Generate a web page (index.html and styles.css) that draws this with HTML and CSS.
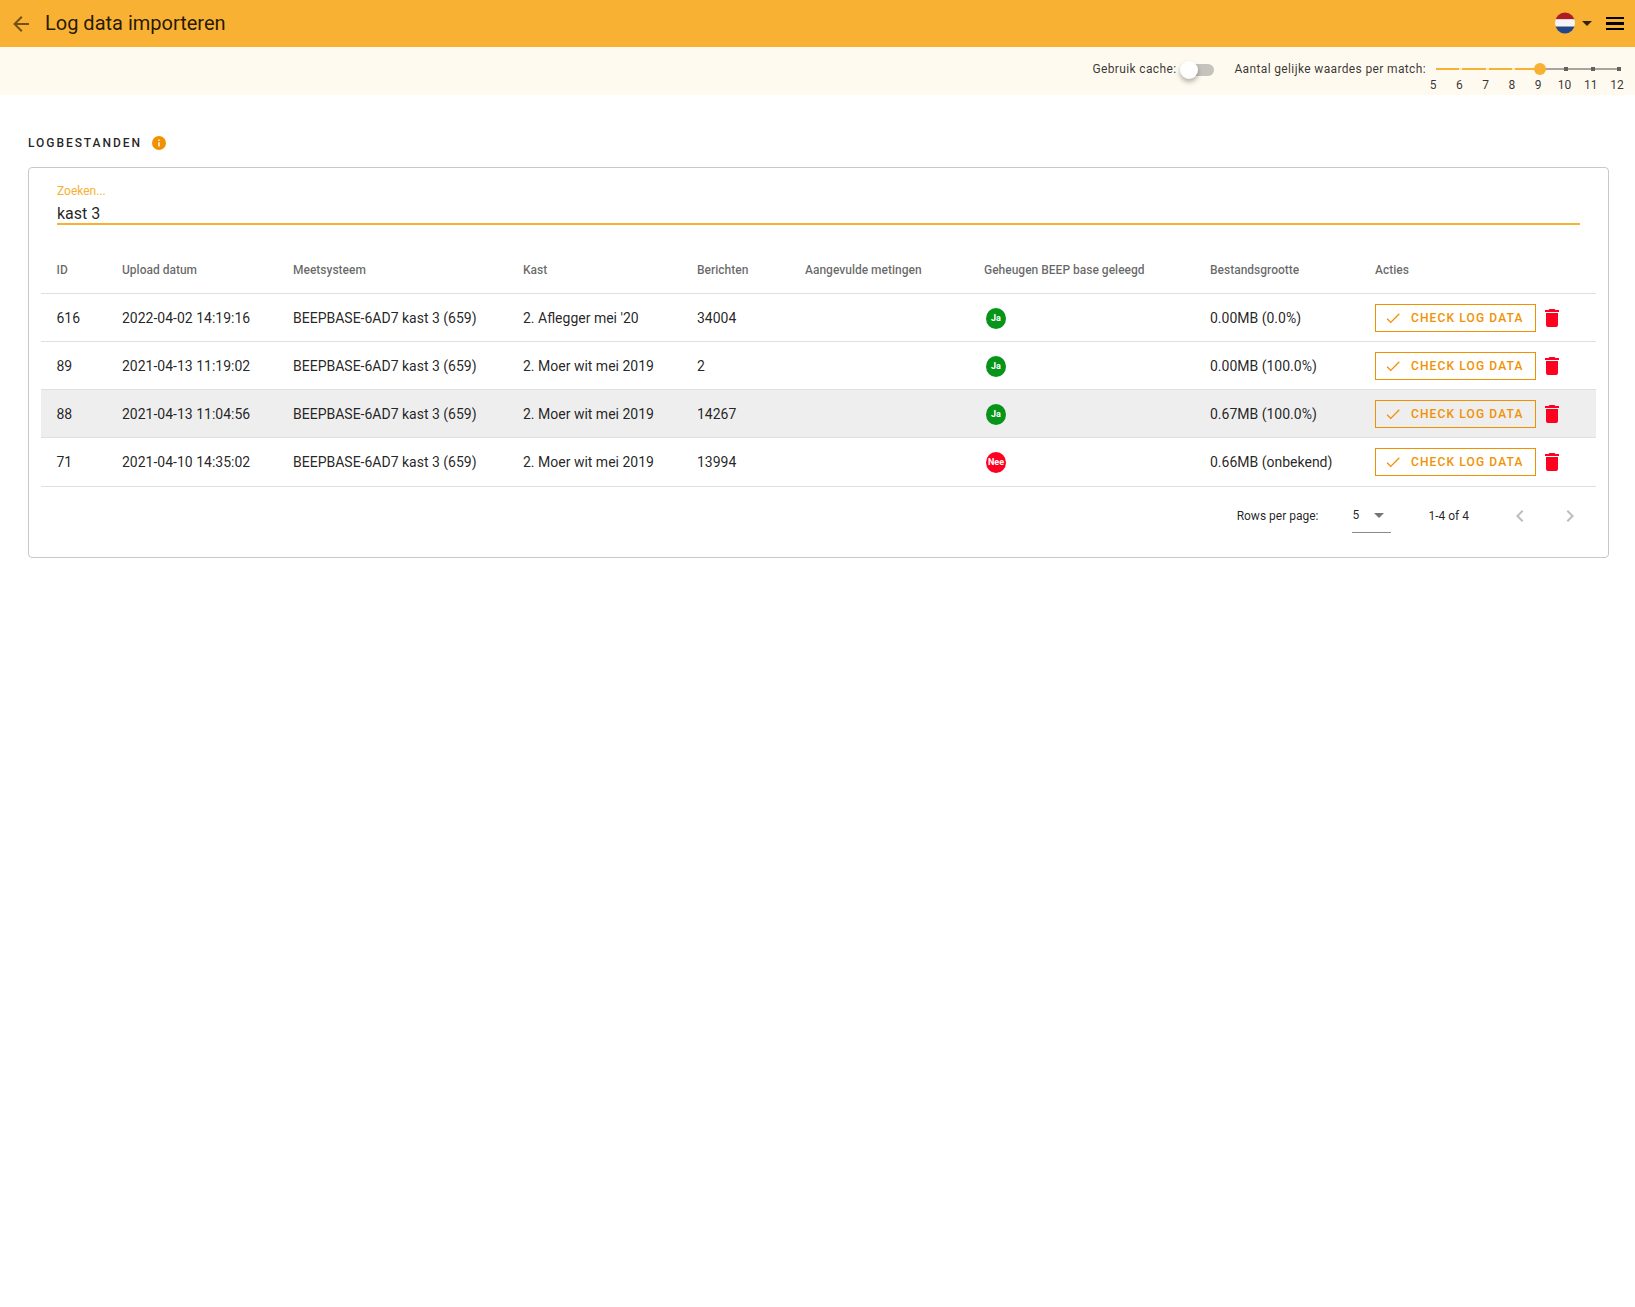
FILE: index.html
```html
<!DOCTYPE html>
<html lang="nl">
<head>
<meta charset="utf-8">
<title>Log data importeren</title>
<link rel="stylesheet" href="styles.css">
</head>
<body>
<header class="topbar">
  <svg class="back" viewBox="0 0 24 24"><path d="M20,11V13H8L13.5,18.5L12.08,19.92L4.16,12L12.08,4.08L13.5,5.5L8,11H20Z"/></svg>
  <h1 class="title">Log data importeren</h1>
  <svg class="flag" viewBox="0 0 20 22"><defs><clipPath id="fc"><ellipse cx="10" cy="11" rx="10" ry="10.5"/></clipPath></defs><g clip-path="url(#fc)"><rect width="20" height="7.3" fill="#ae1c28"/><rect y="7.3" width="20" height="7.3" fill="#f4f5f8"/><rect y="14.6" width="20" height="7.4" fill="#21468b"/></g></svg>
  <span class="caret"></span>
  <span class="burger"><i></i><i></i><i></i></span>
</header>

<section class="subbar">
  <span class="sublabel cache-label">Gebruik cache:</span>
  <span class="switch"><span class="switch-track"></span><span class="switch-thumb"></span></span>
  <span class="sublabel match-label">Aantal gelijke waardes per match:</span>
  <div class="slider">
    <div class="track">
      <i class="seg on"></i><i class="seg on"></i><i class="seg on"></i><i class="seg on"></i>
      <i class="seg off"><b></b></i><i class="seg off"><b></b></i><i class="seg off"><b></b></i>
      <span class="thumb"></span>
    </div>
    <div class="ticks"><span>5</span><span>6</span><span>7</span><span>8</span><span>9</span><span>10</span><span>11</span><span>12</span></div>
  </div>
</section>

<main class="content">
  <h2 class="section-title">LOGBESTANDEN
    <svg class="info" viewBox="2 2 20 20"><path d="M13,9H11V7H13M13,17H11V11H13M12,2A10,10 0 0,0 2,12A10,10 0 0,0 12,22A10,10 0 0,0 22,12A10,10 0 0,0 12,2Z"/></svg>
  </h2>
  <div class="card">
    <div class="search">
      <label class="search-label">Zoeken...</label>
      <div class="search-value">kast 3</div>
    </div>
    <table class="logs">
      <thead>
        <tr><th class="c1">ID</th><th class="c2">Upload datum</th><th class="c3">Meetsysteem</th><th class="c4">Kast</th><th class="c5">Berichten</th><th class="c6">Aangevulde metingen</th><th class="c7">Geheugen BEEP base geleegd</th><th class="c8">Bestandsgrootte</th><th>Acties</th></tr>
      </thead>
      <tbody>
        <tr>
          <td>616</td><td>2022-04-02 14:19:16</td><td>BEEPBASE-6AD7 kast 3 (659)</td><td>2. Aflegger mei '20</td><td>34004</td><td></td>
          <td><span class="badge yes">Ja</span></td><td>0.00MB (0.0%)</td>
          <td><div class="actions"><button class="check"><svg viewBox="0 0 24 24"><path d="M21,7L9,19L3.5,13.5L4.7,12.3L9,16.6L19.8,5.8L21,7Z"/></svg>CHECK LOG DATA</button><svg class="trash" viewBox="0 0 24 24"><path d="M19,4H15.5L14.5,3H9.5L8.5,4H5V6H19V4M6,19A2,2 0 0,0 8,21H16A2,2 0 0,0 18,19V7H6V19Z"/></svg></div></td>
        </tr>
        <tr>
          <td>89</td><td>2021-04-13 11:19:02</td><td>BEEPBASE-6AD7 kast 3 (659)</td><td>2. Moer wit mei 2019</td><td>2</td><td></td>
          <td><span class="badge yes">Ja</span></td><td>0.00MB (100.0%)</td>
          <td><div class="actions"><button class="check"><svg viewBox="0 0 24 24"><path d="M21,7L9,19L3.5,13.5L4.7,12.3L9,16.6L19.8,5.8L21,7Z"/></svg>CHECK LOG DATA</button><svg class="trash" viewBox="0 0 24 24"><path d="M19,4H15.5L14.5,3H9.5L8.5,4H5V6H19V4M6,19A2,2 0 0,0 8,21H16A2,2 0 0,0 18,19V7H6V19Z"/></svg></div></td>
        </tr>
        <tr class="hover">
          <td>88</td><td>2021-04-13 11:04:56</td><td>BEEPBASE-6AD7 kast 3 (659)</td><td>2. Moer wit mei 2019</td><td>14267</td><td></td>
          <td><span class="badge yes">Ja</span></td><td>0.67MB (100.0%)</td>
          <td><div class="actions"><button class="check"><svg viewBox="0 0 24 24"><path d="M21,7L9,19L3.5,13.5L4.7,12.3L9,16.6L19.8,5.8L21,7Z"/></svg>CHECK LOG DATA</button><svg class="trash" viewBox="0 0 24 24"><path d="M19,4H15.5L14.5,3H9.5L8.5,4H5V6H19V4M6,19A2,2 0 0,0 8,21H16A2,2 0 0,0 18,19V7H6V19Z"/></svg></div></td>
        </tr>
        <tr class="last">
          <td>71</td><td>2021-04-10 14:35:02</td><td>BEEPBASE-6AD7 kast 3 (659)</td><td>2. Moer wit mei 2019</td><td>13994</td><td></td>
          <td><span class="badge no">Nee</span></td><td>0.66MB (onbekend)</td>
          <td><div class="actions"><button class="check"><svg viewBox="0 0 24 24"><path d="M21,7L9,19L3.5,13.5L4.7,12.3L9,16.6L19.8,5.8L21,7Z"/></svg>CHECK LOG DATA</button><svg class="trash" viewBox="0 0 24 24"><path d="M19,4H15.5L14.5,3H9.5L8.5,4H5V6H19V4M6,19A2,2 0 0,0 8,21H16A2,2 0 0,0 18,19V7H6V19Z"/></svg></div></td>
        </tr>
      </tbody>
    </table>
    <div class="pager">
      <span class="rows-label">Rows per page:</span>
      <span class="rows-select"><span>5</span><i class="rows-caret"></i></span>
      <span class="range">1-4 of 4</span>
      <svg class="chev prev" viewBox="0 0 24 24"><path d="M15.41,16.58L10.83,12L15.41,7.41L14,6L8,12L14,18L15.41,16.58Z"/></svg>
      <svg class="chev next" viewBox="0 0 24 24"><path d="M8.59,16.58L13.17,12L8.59,7.41L10,6L16,12L10,18L8.59,16.58Z"/></svg>
    </div>
  </div>
</main>
</body>
</html>
```
FILE: styles.css
```css
* { box-sizing: border-box; }
html, body { margin: 0; padding: 0; background: #fff; }
body { font-family: Roboto, "Liberation Sans", sans-serif; color: rgba(0,0,0,.87); height: 1307px; overflow: hidden; }

.topbar { height: 47px; background: #f8b133; display: flex; align-items: center; padding-left: 9px; }
.back { width: 24px; height: 24px; fill: rgba(0,0,0,.54); flex: none; }
.title { margin: 0 0 0 12px; font-size: 20px; font-weight: 400; flex: 1; line-height: 47px; }
.flag { width: 20px; height: 22px; flex: none; margin-bottom: 2px; }
.caret { width: 0; height: 0; border: 5px solid transparent; border-top-color: rgba(0,0,0,.8); border-bottom: 0; margin-left: 7px; flex: none; }
.burger { display: flex; flex-direction: column; gap: 3px; width: 18px; margin: 0 11px 0 14px; flex: none; }
.burger i { display: block; height: 2.5px; background: #000; }

.subbar { height: 48px; background: #fffaef; display: flex; justify-content: flex-end; align-items: flex-start; padding-right: 3px; }
.sublabel { font-size: 12px; letter-spacing: .36px; line-height: 14px; margin-top: 15px; color: rgba(0,0,0,.8); white-space: nowrap; }
.switch { position: relative; width: 34px; height: 18px; margin: 14px 0 0 4px; flex: none; }
.switch-track { position: absolute; left: 6px; right: 0; top: 3px; height: 12px; border-radius: 6px; background: #c6c3bd; }
.switch-thumb { position: absolute; left: 0; top: 0; width: 18px; height: 18px; border-radius: 50%; background: #fff; box-shadow: 0 3px 5px rgba(0,0,0,.3); }
.match-label { margin-left: 20px; }
.slider { width: 197px; margin-left: 9px; flex: none; }
.track { position: relative; display: flex; height: 12px; align-items: center; margin: 16px 0 0 1px; width: 185px; }
.seg { display: block; flex: 0 0 26.43px; height: 2px; position: relative; }
.seg.on { background: #f8b133; border-right: 3px solid #ffe9c0; }
.seg.off { background: #a8a5a0; }
.seg.off b { position: absolute; right: 0; top: -1px; width: 4px; height: 4px; background: #616161; }
.thumb { position: absolute; left: 98px; top: 0; width: 12px; height: 12px; border-radius: 50%; background: #f8b133; }
.ticks { display: flex; justify-content: space-between; font-size: 12px; line-height: 14px; margin-top: 3px; color: rgba(0,0,0,.8); width: 198px; margin-left: -9px; }
.ticks span { width: 14px; text-align: center; }

.content { padding: 40px 26px 0 28px; }
.section-title { margin: 0; display: flex; align-items: center; font-size: 12px; font-weight: 500; letter-spacing: 1.95px; line-height: 14px; height: 14px; margin-top: 1px; }
.info { width: 14px; height: 14px; fill: #f29100; margin-left: 10px; }

.card { margin-top: 17px; width: 1581px; height: 391px; border: 1px solid #c8c8c8; border-radius: 4px; padding: 16px 12px 0; }
.search { margin: 0 16px 0 16px; height: 41px; border-bottom: 2px solid #f8b133; }
.search-label { display: block; font-size: 12px; line-height: 14px; color: #f8b133; }
.search-value { font-size: 16px; line-height: 20px; margin-top: 6px; }

.logs { border-collapse: collapse; table-layout: fixed; width: 1555px; margin-top: 18px; }
.logs th { text-align: left; font-size: 12px; font-weight: 500; color: rgba(0,0,0,.6); height: 50px; padding: 4px 0 0 16px; border-bottom: 1px solid #e0e0e0; white-space: nowrap; }
.logs td { font-size: 14px; height: 48px; padding: 1px 0 0 16px; border-bottom: 1px solid #e0e0e0; white-space: nowrap; }
.logs th:first-child, .logs td:first-child { padding-left: 15.5px; }
.logs tr.last td { height: 49px; padding-top: 0; }
.logs tr.hover td { background: #eeeeee; }
.c1 { width: 65px; } .c2 { width: 171px; } .c3 { width: 230px; } .c4 { width: 174px; }
.c5 { width: 108px; } .c6 { width: 179px; } .c7 { width: 226px; } .c8 { width: 165px; }

.badge { display: flex; width: 20px; height: 21px; border-radius: 50%; margin: 1px 0 0 2px; align-items: center; justify-content: center; color: #fff; font-size: 9px; font-weight: 700; }
.badge.yes { background: #069518; }
.badge.no { background: #ff0020; }

.actions { display: flex; align-items: center; margin-top: 1px; }
.check { display: flex; align-items: center; width: 161px; height: 28px; padding: 0 0 0 8px; background: transparent; border: 1px solid #f29100; color: #f29100; font-family: inherit; font-size: 12px; font-weight: 500; letter-spacing: 1.13px; white-space: nowrap; }
.check svg { width: 18px; height: 18px; fill: #f29100; margin-right: 9px; flex: none; }
.trash { width: 24px; height: 24px; fill: #ff0020; margin-left: 4px; flex: none; }

.pager { display: flex; align-items: center; height: 58px; font-size: 12px; justify-content: flex-end; padding-right: 14px; }
.rows-label { margin-right: 34px; }
.rows-select { display: flex; align-items: center; width: 39px; height: 34px; border-bottom: 1px solid #8a8a8a; margin-right: 37px; padding-left: 0; }
.rows-caret { width: 0; height: 0; border: 5px solid transparent; border-top-color: rgba(0,0,0,.54); border-bottom: 0; margin-left: 15px; }
.range { margin-right: 39px; }
.chev { width: 24px; height: 24px; fill: rgba(0,0,0,.26); flex: none; }
.next { margin-left: 26px; }
```
